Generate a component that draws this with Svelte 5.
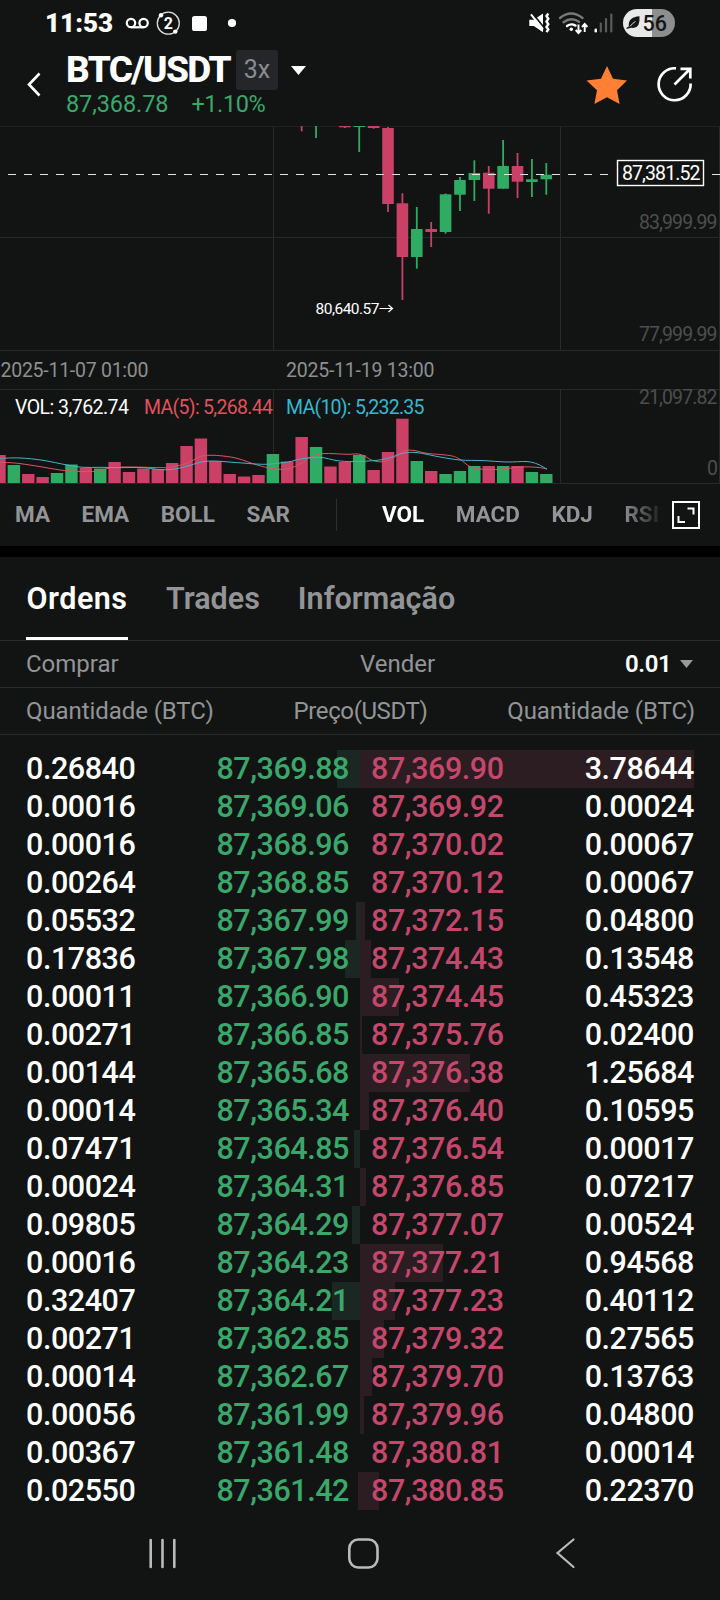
<script lang="ts">
  type Candle = { up: boolean; open: number; close: number; high: number; low: number };

  const STEP = 14.39;
  const LAST_X = 546.3;
  const CHART_TOP = 126;

  // newest candle first
  const candles: Candle[] = [
    { up: true, open: 174.7, close: 179.3, high: 163, low: 194.7 },
    { up: true, open: 179.3, close: 182, high: 159, low: 197 },
    { up: false, open: 166, close: 181.7, high: 153, low: 198 },
    { up: true, open: 166, close: 188.7, high: 140, low: 188.7 },
    { up: false, open: 172.7, close: 188.7, high: 166, low: 213.7 },
    { up: true, open: 173, close: 180, high: 160.3, low: 201 },
    { up: true, open: 180, close: 194.7, high: 177, low: 211 },
    { up: true, open: 194.3, close: 232, high: 193.5, low: 233.7 },
    { up: false, open: 229, close: 232, high: 222, low: 247 },
    { up: true, open: 229, close: 257, high: 207, low: 268.7 },
    { up: false, open: 203.3, close: 257, high: 193.3, low: 300 },
    { up: false, open: 128, close: 204, high: 127, low: 212 },
    { up: false, open: 126, close: 128, high: 126, low: 128.7 },
    { up: true, open: 126, close: 127, high: 126, low: 152 },
    { up: false, open: 126, close: 127.3, high: 126, low: 128 },
    { up: true, open: 126, close: 126, high: 126, low: 126 },
    { up: true, open: 126, close: 126, high: 126, low: 138 },
    { up: false, open: 126, close: 126, high: 126, low: 131.3 },
  ];

  // height and direction, newest first
  const volumes: [number, string][] = [
    [9, "g"], [11, "g"], [17, "r"], [17, "g"], [17, "r"], [17, "g"], [12, "g"], [9, "g"],
    [12, "r"], [22, "g"], [64.3, "r"], [31, "r"], [13, "r"], [28, "g"], [21, "r"], [16.5, "r"],
    [36, "g"], [46, "r"], [21.5, "r"], [29, "g"], [8, "r"], [6.5, "r"], [9, "r"], [22, "r"],
    [44.5, "r"], [37, "r"], [20, "r"], [14, "r"], [14.5, "r"], [11, "r"], [21, "r"], [14.5, "g"],
    [15, "r"], [18.5, "g"], [10, "g"], [6, "r"], [9, "r"], [18, "g"], [28, "r"],
  ];

  const ma5 = [
    [0, 73], [10, 73.4], [20, 74.3], [40, 77.3], [60, 80.7], [77, 82], [97, 82], [110, 78.7],
    [127, 77.7], [160, 78.3], [170, 78], [187, 74], [200, 67.3], [210, 66], [223, 66.7],
    [238, 69.3], [257, 75.7], [273, 79.3], [287, 79.7], [300, 74.7], [310, 68], [323, 64.3],
    [347, 65], [360, 65], [373, 71.3], [383, 72.3], [393, 69], [403, 62], [413, 61], [427, 64],
    [450, 66.3], [460, 70], [470, 77.3], [483, 80], [500, 80], [520, 77.7], [537, 78], [547, 79.7],
  ];
  const ma10 = [
    [0, 69], [20, 68.7], [43, 71], [67, 75.7], [83, 78], [100, 78], [117, 78.3], [143, 78.3],
    [160, 80.3], [173, 80], [187, 77], [200, 73], [213, 71.7], [233, 73], [263, 75], [280, 73.7],
    [290, 72.3], [303, 69.3], [320, 68], [337, 71.3], [353, 72.3], [377, 71], [390, 68.3],
    [403, 64], [417, 63.3], [440, 67.7], [460, 70.7], [483, 71.3], [507, 72.7], [527, 72.3],
    [538, 75], [547, 80],
  ];

  function smooth(points: number[][]) {
    let d = `M${points[0][0]} ${points[0][1]}`;
    for (let i = 1; i < points.length; i++) {
      const [x0, y0] = points[i - 1];
      const [x1, y1] = points[i];
      const before = points[i - 2] ?? points[i - 1];
      const after = points[i + 1] ?? points[i];
      d += `C${x0 + (x1 - before[0]) / 6} ${y0 + (y1 - before[1]) / 6} ${x1 - (after[0] - x0) / 6} ${y1 - (after[1] - y0) / 6} ${x1} ${y1}`;
    }
    return d;
  }

  const overlays = ["MA", "EMA", "BOLL", "SAR"];
  const studies = ["VOL", "MACD", "KDJ", "RSI"];
  const tabs = ["Ordens", "Trades", "Informação"];

  // bid qty, bid price, ask price, ask qty, bid depth, ask depth (px)
  const book: [string, string, string, string, number, number][] = [
    ["0.26840", "87,369.88", "87,369.90", "3.78644", 23, 334],
    ["0.00016", "87,369.06", "87,369.92", "0.00024", 0, 0],
    ["0.00016", "87,368.96", "87,370.02", "0.00067", 0, 0],
    ["0.00264", "87,368.85", "87,370.12", "0.00067", 0, 0],
    ["0.05532", "87,367.99", "87,372.15", "0.04800", 4, 5],
    ["0.17836", "87,367.98", "87,374.43", "0.13548", 15, 11],
    ["0.00011", "87,366.90", "87,374.45", "0.45323", 0, 39],
    ["0.00271", "87,366.85", "87,375.76", "0.02400", 0, 2],
    ["0.00144", "87,365.68", "87,376.38", "1.25684", 0, 110],
    ["0.00014", "87,365.34", "87,376.40", "0.10595", 0, 9],
    ["0.07471", "87,364.85", "87,376.54", "0.00017", 6, 0],
    ["0.00024", "87,364.31", "87,376.85", "0.07217", 0, 6],
    ["0.09805", "87,364.29", "87,377.07", "0.00524", 8, 0],
    ["0.00016", "87,364.23", "87,377.21", "0.94568", 0, 83],
    ["0.32407", "87,364.21", "87,377.23", "0.40112", 28, 35],
    ["0.00271", "87,362.85", "87,379.32", "0.27565", 0, 24],
    ["0.00014", "87,362.67", "87,379.70", "0.13763", 0, 12],
    ["0.00056", "87,361.99", "87,379.96", "0.04800", 0, 4],
    ["0.00367", "87,361.48", "87,380.81", "0.00014", 0, 0],
    ["0.02550", "87,361.42", "87,380.85", "0.22370", 0, 19],
  ];
</script>

<div class="screen">
  <div class="status">
    <span class="clock">11:53</span>
    <svg class="status-left" width="120" height="30" viewBox="122 8 120 30">
      <g fill="none" stroke="#fff" stroke-width="2.2">
        <circle cx="131" cy="23" r="4.2" />
        <circle cx="143.6" cy="23" r="4.2" />
        <path d="M131 27.3h12.6" />
      </g>
      <circle cx="168.3" cy="23.2" r="11" fill="none" stroke="#dcdcdc" stroke-width="1.3" />
      <circle cx="161" cy="15.3" r="2.2" fill="#fff" />
      <circle cx="175.3" cy="31.6" r="2.2" fill="#fff" />
      <text x="168.3" y="29" class="badge" text-anchor="middle">2</text>
      <rect x="192" y="16" width="15" height="15" rx="2.6" fill="#fff" />
      <circle cx="232" cy="23" r="4.1" fill="#fff" />
    </svg>
    <svg class="status-right" width="160" height="34" viewBox="520 6 160 34">
      <path d="M529.3 19.8h4.500l9.200-6.300v18.700l-9.200-6.200h-4.500z" fill="#fff" />
      <path d="M533 14l11 13.500" stroke="#121413" stroke-width="1.800" />
      <path d="M531 14.300l12 15.200" stroke="#fff" stroke-width="2" />
      <path d="M548.300 13.500l-1.800 2.600 1.800 2.700-1.800 2.700 1.800 2.700-1.800 2.700 1.800 2.600-1.800 2.600" fill="none" stroke="#fff" stroke-width="2.400" />
      <g fill="none" stroke-linecap="round" stroke-width="2.4">
        <path d="M560 18q11-9 22.500 0" stroke="#777978" />
        <path d="M563.5 22.300q7.500-5.800 15.500-.5" stroke="#777978" />
        <path d="M567 26q4.200-3 8.500-.4" stroke="#fff" />
      </g>
      <circle cx="571.3" cy="29.3" r="1.7" fill="#fff" />
      <path d="M578.5 24.500v8M575.700 30l2.800 3 2.800-3M584.700 32v-7.500M582 27l2.700-3 2.700 3" fill="none" stroke="#fff" stroke-width="1.9" />
      <g fill="#5a5c5b">
        <rect x="594.5" y="28.500" width="2.500" height="4" rx="1.200" fill="#fff" />
        <rect x="599.7" y="22.5" width="2.200" height="10" rx="1" />
        <rect x="604.9" y="18" width="2.200" height="14.500" rx="1" />
        <rect x="610.2" y="13.500" width="2.200" height="19" rx="1" />
      </g>
      <path d="M652 9h-15a14 14 0 0 0 0 28h15z" fill="#e9e9e9" />
      <path d="M652 9h9a14 14 0 0 1 0 28h-9z" fill="#8d8e8e" />
      <path d="M628.800 26.500q-1-9.500 10.700-10.200 1 13-8 11.500l-5.300 1.200q0-2 2.600-2.500" fill="#141615" />
      <path d="M630 26.500q2.500-3.500 5.500-5" fill="none" stroke="#e9e9e9" stroke-width=".9" />
      <text x="642.5" y="31" class="battery" textLength="24.500">56</text>
    </svg>
  </div>

  <header>
    <svg class="back" width="14" height="26" viewBox="0 0 14 26">
      <path d="M12.500 1.500L2 12.500 12.500 23.500" fill="none" stroke="#fff" stroke-width="2.600" />
    </svg>
    <div class="pair">
      <div class="pair-row">
        <h1>BTC/USDT</h1>
        <span class="leverage">3x</span>
        <svg class="caret" width="15" height="9" viewBox="0 0 15 9"><path d="M0 0h15l-7.500 9z" fill="#fff" /></svg>
      </div>
      <div class="quote"><span>87,368.78</span><span class="change">+1.10%</span></div>
    </div>
    <svg class="star" width="42" height="38" viewBox="0 0 42 38">
      <path d="M21 0l6 12.800 14 1.600-10 9.800 2.600 13.800L21 31.200 8.400 38 11 24.200.5 14.400l14.500-1.600z" fill="#ff8035" />
    </svg>
    <svg class="share" width="38" height="38" viewBox="0 0 38 38">
      <path d="M20 2.300A16 16 0 1 0 34.600 17.500M18.500 18.500L34 3M24.500 2.800H34.300V12.500" fill="none" stroke="#fff" stroke-width="2.700" />
    </svg>
  </header>

  <svg class="chart" width="720" height="358" viewBox="0 126 720 358">
    <g fill="#282a2a">
      <rect x="0" y="126" width="720" height="1" fill="#1f2121" />
      <rect x="0" y="237" width="720" height="1" />
      <rect x="0" y="350" width="720" height="1" />
      <rect x="0" y="389" width="720" height="1" />
      <rect x="0" y="483" width="720" height="1" />
      <rect x="273" y="126" width="1" height="224" />
      <rect x="560" y="126" width="1" height="224" />
      <rect x="273" y="389" width="1" height="94" />
      <rect x="560" y="389" width="1" height="94" />
      <rect x="719" y="126" width="1" height="357" />
    </g>
    {#each candles as c, i}
      <g class={c.up ? "up" : "down"}>
        <rect x={LAST_X - i * STEP - 0.9} y={Math.max(c.high, CHART_TOP)} width="1.8" height={c.low - c.high} />
        <rect x={LAST_X - i * STEP - 5.8} y={c.open} width="11.6" height={c.close - c.open} />
      </g>
    {/each}
    <path d="M8 174.500H616M712 174.500H720" stroke="#e4e4e4" stroke-width="1" stroke-dasharray="8 8" />
    <rect x="617.500" y="160.500" width="86" height="25" fill="#121413" stroke="#fff" stroke-width="1.400" />
    <text x="622" y="180" class="t now" textLength="78.500">87,381.52</text>
    <text x="315.500" y="314" class="low" textLength="64">80,640.57</text>
    <path d="M379.500 308.500H392M388.500 305l4 3.500-4 3.500" fill="none" stroke="#fff" stroke-width="1.200" />
    <g class="t axis">
      <text x="639" y="229" textLength="78.500">83,999.99</text>
      <text x="639" y="341" textLength="78.500">77,999.99</text>
      <text x="639" y="404" textLength="78.500">21,097.82</text>
      <text x="707" y="475">0</text>
    </g>
    <g class="t date">
      <text x="0.500" y="377" textLength="148">2025-11-07 01:00</text>
      <text x="286" y="377" textLength="148.500">2025-11-19 13:00</text>
    </g>
    <text x="15" y="414" class="t now" textLength="114">VOL: 3,762.74</text>
    <text x="144" y="414" class="t ma5" textLength="129">MA(5): 5,268.44</text>
    <text x="286" y="414" class="t ma10" textLength="138.500">MA(10): 5,232.35</text>
    {#each volumes as [h, dir], i}
      <rect class={dir === "g" ? "up" : "down"} x={LAST_X - i * STEP - 6.2} y={483 - h} width="12.4" height={h} />
    {/each}
    <g transform="translate(0 389.300)" fill="none" stroke-width="1">
      <path d={smooth(ma5)} stroke="#dc5560" />
      <path d={smooth(ma10)} stroke="#45b3cc" />
    </g>
  </svg>

  <nav class="indicators">
    <div class="overlays">
      {#each overlays as name}<span>{name}</span>{/each}
    </div>
    <i class="divider"></i>
    <div class="studies">
      {#each studies as name, i}<span class:active={i === 0}>{name}</span>{/each}
    </div>
    <svg width="28" height="28" viewBox="0 0 28 28">
      <path d="M1 1h26v26H1zM15.500 7.500h6v6M6.500 15v6h6.500" fill="none" stroke="#fff" stroke-width="2" />
    </svg>
  </nav>

  <div class="gap"></div>

  <div class="tabs">
    {#each tabs as tab, i}<span class:active={i === 0}>{tab}</span>{/each}
  </div>

  <div class="sides">
    <span class="buy">Comprar</span>
    <span class="sell">Vender</span>
    <span class="precision">0.01</span>
    <svg width="13" height="8" viewBox="0 0 13 8"><path d="M0 0h13l-6.500 8z" fill="#97999b" /></svg>
  </div>
  <div class="columns">
    <span>Quantidade (BTC)</span>
    <span class="price">Preço(USDT)</span>
    <span>Quantidade (BTC)</span>
  </div>

  <div class="book">
    {#each book as [bidQty, bid, ask, askQty, bidDepth, askDepth], i}
      <div class="row" class:last-row={i === book.length - 1}>
        <div class="side bids">
          <i class="depth" style="width:{bidDepth}px"></i>
          <span>{bidQty}</span><b>{bid}</b>
        </div>
        <div class="side asks">
          <i class="depth" style="width:{askDepth}px"></i>
          <b>{ask}</b><span>{askQty}</span>
        </div>
      </div>
    {/each}
  </div>

  <footer>
    <svg width="720" height="90" viewBox="0 1510 720 90">
      <g fill="none" stroke="#b9bab9" stroke-width="2.600" stroke-linecap="round">
        <path d="M150.700 1540v27M162.500 1540v27M174.300 1540v27" />
        <rect x="349.300" y="1539.500" width="28.200" height="28" rx="9" />
        <path d="M573.500 1539.500l-16 13.500 16 14" stroke-width="2.200" />
      </g>
    </svg>
  </footer>
</div>

<style>
  :global(body) {
    background: #121413;
  }

  .screen {
    width: 720px;
    height: 1600px;
    overflow: hidden;
    background: #121413;
    color: #fff;
    font-family: Roboto, "Liberation Sans", sans-serif;
  }

  .status {
    display: flex;
    align-items: center;
    height: 46px;
  }

  .clock {
    width: 77px;
    padding-left: 45px;
    font-size: 26px;
    font-weight: 900;
  }

  .status-right {
    margin-left: 278px;
  }

  .badge {
    font-size: 16px;
    font-weight: 700;
    fill: #fff;
  }

  .battery {
    font-size: 21.5px;
    font-weight: 500;
    fill: #141615;
  }

  header {
    display: flex;
    height: 80px;
  }

  .back {
    margin: 26px 25px 0 27px;
  }

  .pair {
    width: 520px;
  }

  .pair-row {
    display: flex;
    height: 44px;
    padding-top: 4px;
    box-sizing: border-box;
  }

  h1 {
    width: 170px;
    margin: 0;
    font-size: 37px;
    font-weight: 800;
    line-height: 40px;
    letter-spacing: -1.6px;
    white-space: nowrap;
  }

  .leverage {
    width: 42px;
    height: 40px;
    border-radius: 3px;
    background: #25262a;
    color: #8b8c90;
    font-size: 25px;
    line-height: 40px;
    text-align: center;
  }

  .caret {
    margin: 16px 0 0 13px;
  }

  .quote {
    display: flex;
    color: #3aa76b;
    font-size: 23.5px;
    line-height: 29px;
    letter-spacing: -0.1px;
  }

  .change {
    margin-left: 23px;
    letter-spacing: -0.4px;
  }

  .star {
    margin-top: 20px;
  }

  .share {
    margin: 20px 0 0 28px;
  }

  .chart {
    display: block;
  }

  .up {
    fill: #2fab64;
  }

  .down {
    fill: #ca4066;
  }

  .t {
    font-size: 19.5px;
  }

  .now {
    fill: #fff;
  }

  .low {
    font-size: 15.5px;
    fill: #fff;
  }

  .axis {
    fill: #4c4e4f;
  }

  .date {
    fill: #8d8f91;
  }

  .ma5 {
    fill: #e0525c;
  }

  .ma10 {
    fill: #35b8cf;
  }

  .indicators {
    display: flex;
    align-items: center;
    height: 62px;
    color: #929497;
    font-size: 22.5px;
    font-weight: 700;
  }

  .indicators span {
    margin-top: -2px;
  }

  .overlays {
    display: flex;
    gap: 31.5px;
    width: 321px;
    padding-left: 15px;
  }

  .divider {
    width: 1px;
    height: 32px;
    background: #2c2e2f;
  }

  .studies {
    display: flex;
    gap: 31.5px;
    width: 322px;
    padding-left: 45px;
    box-sizing: border-box;
    mask-image: linear-gradient(to right, #000 285px, transparent 328px);
  }

  .indicators svg {
    margin-left: 13px;
  }

  .active {
    color: #fff;
  }

  .gap {
    height: 11px;
    background: #000;
  }

  .tabs {
    display: flex;
    gap: 38px;
    height: 83px;
    padding-left: 26px;
    border-bottom: 1px solid #2a2c2c;
    color: #929497;
    font-size: 30.5px;
    font-weight: 600;
    line-height: 84px;
  }

  .tabs .active {
    width: 102px;
    height: 80px;
    border-bottom: 3px solid #fff;
    letter-spacing: 0.5px;
    text-align: center;
  }

  .sides,
  .columns {
    display: flex;
    align-items: center;
    height: 46px;
    padding: 0 27px 0 26px;
    border-bottom: 1px solid #2a2c2c;
    color: #929497;
    font-size: 24px;
  }

  .buy {
    width: 334px;
  }

  .sell {
    width: 265px;
  }

  .precision {
    width: 55px;
    color: #fff;
    font-weight: 600;
    letter-spacing: -0.4px;
  }

  .columns {
    justify-content: space-between;
    padding-right: 25px;
    letter-spacing: -0.08px;
  }

  .price {
    letter-spacing: -0.4px;
  }

  .book {
    padding-top: 15px;
  }

  .row {
    display: flex;
    height: 38px;
    font-size: 30.5px;
    line-height: 38px;
    letter-spacing: -0.45px;
  }

  .side {
    position: relative;
    display: flex;
    justify-content: space-between;
    width: 360px;
    box-sizing: border-box;
  }

  .bids {
    padding: 0 11px 0 26px;
  }

  .asks {
    padding: 0 26px 0 11px;
  }

  .side b,
  .side span {
    position: relative;
    font-weight: 500;
  }

  .bids b {
    color: #3aa76b;
  }

  .asks b {
    color: #c4476c;
  }

  .depth {
    position: absolute;
    top: 0;
    height: 38px;
  }

  .bids .depth {
    right: 0;
    background: #1a2723;
  }

  .asks .depth {
    left: 0;
    background: #2b1d22;
  }

  .last-row .asks .depth {
    left: -2px;
    border-left: 2px solid #2b1d22;
  }

  footer {
    height: 90px;
  }

  footer svg {
    display: block;
  }
</style>
